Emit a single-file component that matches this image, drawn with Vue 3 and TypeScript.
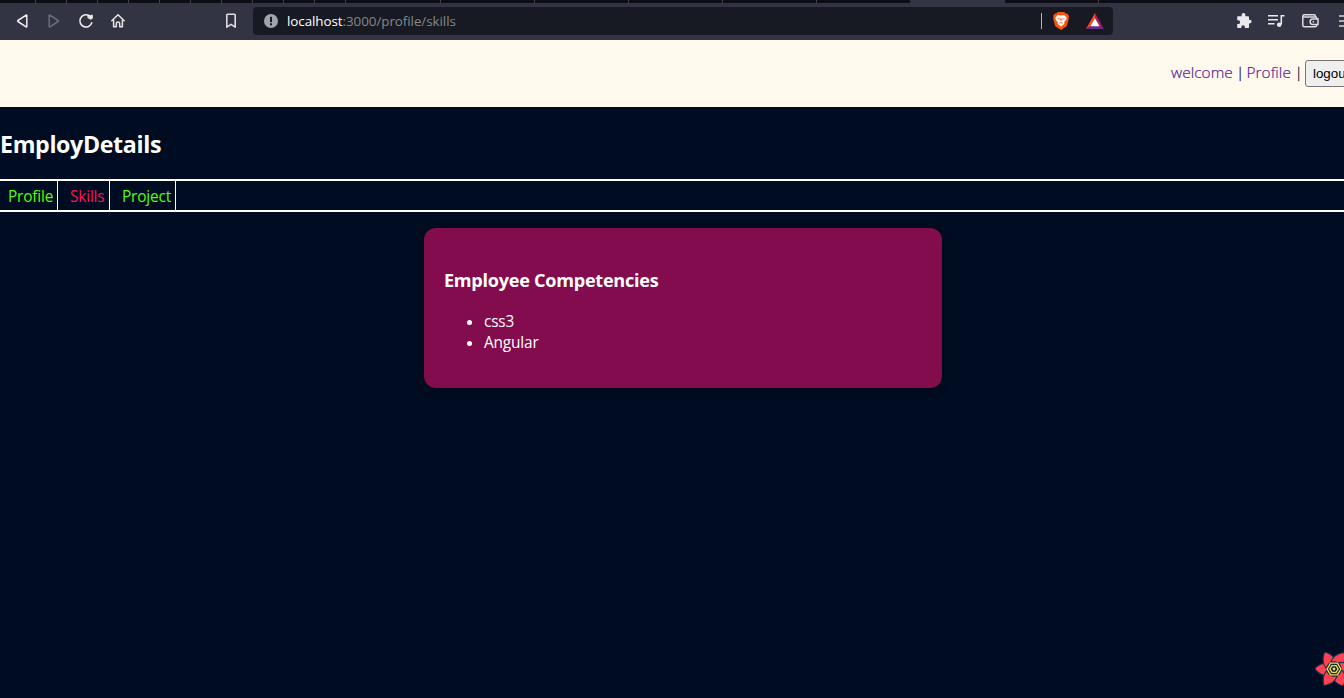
<script setup lang="ts">
interface NavTab {
  label: string
  kind: string
  active?: boolean
}

const tabEdges: number[] = [35, 66, 97, 128, 159, 190, 221, 252, 283, 314, 345, 440, 534, 628, 722, 816, 1098]
const tabs: NavTab[] = [
  { label: 'Profile', kind: 'profile' },
  { label: 'Skills', kind: 'skills', active: true },
  { label: 'Project', kind: 'project' },
]
const skills: string[] = ['css3', 'Angular']
const petals: number[] = [0, 60, 120, 180, 240, 300]
</script>

<template>
  <div class="window">
    <svg class="tabstrip" width="1344" height="3" shape-rendering="crispEdges">
      <rect width="1344" height="3" fill="#0c0d16" />
      <rect v-for="x in tabEdges" :key="x" :x="x" y="0" width="1" height="3" fill="#45413f" />
      <rect x="910" y="0" width="95" height="3" fill="#323443" />
    </svg>
    <div class="toolbar">
      <div class="nav-icons">
        <svg width="32" height="32" viewBox="0 0 32 32" fill="none" stroke="#eeeeef" stroke-width="1.5" stroke-linejoin="round">
          <path d="M18.8 10.4v11.2q0 .7-.7.3L9.9 16.5q-.7-.5 0-1l8.2-5.4q.7-.4.7.3Z" />
        </svg>
        <svg width="32" height="32" viewBox="0 0 32 32" fill="none" stroke="#6d6e7a" stroke-width="1.5" stroke-linejoin="round">
          <path d="M9.2 10.4v11.2q0 .7.7.3l8.2-5.4q.7-.5 0-1l-8.2-5.4q-.7-.4-.7.3Z" />
        </svg>
        <svg width="32" height="32" viewBox="0 0 32 32" fill="none" stroke="#eeeeef" stroke-width="1.6" stroke-linecap="round">
          <path d="M17.2 10.7A6.1 6.1 0 1 0 19.8 17.8" />
          <path d="M16.2 10.4h2.3l1.9-.3v3.2l-1.4 1-2.8-1.2Z" fill="#eeeeef" stroke-width=".8" />
        </svg>
        <svg width="32" height="32" viewBox="0 0 32 32" fill="none" stroke="#e6e6e8" stroke-width="1.5" stroke-linejoin="round" stroke-linecap="round">
          <path d="M7.8 15.7 14 9.8l6.2 5.9M9.6 14.7v7h2.7v-3.3q0-1.4 1.7-1.4t1.7 1.4v3.3h2.7v-7" />
        </svg>
      </div>
      <svg class="bookmark" width="14" height="18" viewBox="0 0 14 18" fill="none" stroke="#dcdcdf" stroke-width="1.6" stroke-linejoin="round">
        <path d="M2.8 3q0-.8.8-.8h6.8q.8 0 .8.8v12.2L7 12.4l-4.2 2.8Z" />
      </svg>
      <div class="address">
        <svg width="14" height="14" viewBox="0 0 14 14">
          <circle cx="7" cy="7" r="7" fill="#a0a3ab" />
          <rect x="6" y="2.8" width="2" height="5.4" fill="#171a22" />
          <rect x="6" y="9.3" width="2" height="2" fill="#171a22" />
        </svg>
        <div class="url"><span class="host">localhost</span><span class="path">:3000/profile/skills</span></div>
        <span class="divider"></span>
        <svg class="brave" width="16" height="18" viewBox="0 0 16 18">
          <path d="m4.8 0h6.4l1.5 1.6 1.5-.2L16 4l-.5 1.5.3 1.5-2.1 7.3L8 18l-5.7-3.7L.2 7l.3-1.5L0 4l1.8-2.6 1.5.2Z" fill="#fb5410" />
          <path d="m4.8 3 3.2.5 3.2-.5 2.6 2.8-.8 2.2-1.8 2 .2 1.8L8 14.4l-3.4-2.6.2-1.8L3 8l-.8-2.2Z" fill="#fff" />
          <path d="m4.6 6.6 2 .5M11.4 6.6l-2 .5M6.2 11.4 8 10.5l1.8.9M7.4 6.5v2M8.6 6.5v2" fill="none" stroke="#fb5410" stroke-width=".8" />
        </svg>
        <svg class="bat" width="18" height="16" viewBox="0 0 18 16">
          <path d="M9 0 0 16l5-3 4-7Z" fill="#ff4724" />
          <path d="m9 0 9 16-5-3-4-7Z" fill="#9e1f63" />
          <path d="m0 16 5-3h8l5 3Z" fill="#662d91" />
          <path d="m9 5.2 4.5 8h-9Z" fill="#fff" />
        </svg>
      </div>
      <div class="extensions">
        <svg width="16" height="16" viewBox="0 0 16 16" fill="#e9e9eb">
          <path d="M2 3.2h3.6V2a1.9 1.9 0 0 1 3.8 0v1.2h2.8q.8 0 .8.8v2.8h.8a1.8 1.8 0 0 1 0 3.6H13v3.8q0 .8-.8.8H8.9v-1a1.8 1.8 0 0 0-3.6 0v1H2q-.8 0-.8-.8v-3.1h1a1.9 1.9 0 0 0 0-3.8h-1V4q0-.8.8-.8Z" />
        </svg>
        <svg width="17" height="14" viewBox="0 0 17 14" fill="none" stroke="#e9e9eb" stroke-width="1.6">
          <path d="M0 1.8h10M0 5.8h10M0 9.8h6.5M16.5 1.8h-3.2v8.8" />
          <circle cx="11.2" cy="10.8" r="2.3" fill="#e9e9eb" stroke="none" />
        </svg>
        <svg width="17" height="14" viewBox="0 0 17 14" fill="none" stroke="#dddde0" stroke-width="1.5">
          <path d="M14.7 5V4q0-1-1-1H.8M13.4 3V2q0-1.2-1.2-1.2H2.4Q.8.8.8 2.4v8.8q0 1.6 1.6 1.6h10.7q1.6 0 1.6-1.6v-.5" />
          <path d="M16 5.1h-5.2a2.7 2.7 0 0 0 0 5.4H16Z" />
          <path d="M10.6 7.8h1.5" />
        </svg>
        <svg width="16" height="14" viewBox="0 0 16 14" stroke="#d4d4d8" stroke-width="1.7">
          <path d="M0 2h16M0 7h16M0 12h16" />
        </svg>
      </div>
    </div>

    <header class="site-header">
      <a class="link welcome">welcome</a><span class="pipe">|</span>
      <a class="link account">Profile</a><span class="pipe">|</span>
      <button class="logout" type="button">logout</button>
    </header>

    <main class="content">
      <h2>EmployDetails</h2>
      <nav class="tabs">
        <a v-for="tab in tabs" :key="tab.label" class="tab" :class="[tab.kind, { active: tab.active }]">{{ tab.label }}</a>
      </nav>
      <section class="card">
        <h3>Employee Competencies</h3>
        <ul>
          <li v-for="skill in skills" :key="skill">{{ skill }}</li>
        </ul>
      </section>
    </main>

    <svg class="query-logo" width="40" height="40" viewBox="-20 -20 40 40">
      <g stroke="#123550" stroke-width="1.1" stroke-linejoin="round" fill="#ff4154">
        <path v-for="angle in petals" :key="angle" :transform="`rotate(${angle})`" d="M-5-5.5C-10-6.5-15-4.5-18.6-1.2Q-19.2-.2-18.4.8C-15 4.6-10 7.2-5 6.5Z" />
      </g>
      <circle r="7.8" fill="#0a2438" />
      <g fill="none" stroke="#f2d94c" stroke-width="1.4">
        <path d="M-6.9 0-3.45-5.9h6.9L6.9 0 3.45 5.9h-6.9Z" />
        <path d="M-4.1 0-2.05-3.4h4.1L4.1 0 2.05 3.4h-4.1Z" />
      </g>
      <circle r="1.4" fill="#f2d94c" />
    </svg>
  </div>
</template>

<style>
html,
body {
  margin: 0;
  overflow: hidden;
  background: #000c22;
}
</style>

<style scoped>
.window {
  width: 1344px;
  height: 698px;
  position: relative;
  overflow: hidden;
  background: #000c22;
  color: #fff;
  font-family: "Open Sans", "Noto Sans", sans-serif;
  font-size: 15.4px;
  letter-spacing: -0.17px;
  line-height: 21px;
}
.tabstrip {
  display: block;
}
.toolbar {
  box-sizing: border-box;
  height: 37px;
  background: #323443;
  display: flex;
  align-items: center;
  padding: 0 0 1px 8px;
}
.toolbar > *,
.site-header > * {
  flex: none;
}
.nav-icons {
  display: flex;
}
.nav-icons svg {
  display: block;
  position: relative;
  top: -0.5px;
}
.bookmark {
  margin-left: 88px;
}
.address {
  margin-left: 15px;
  width: 860px;
  height: 28px;
  border-radius: 4px;
  box-sizing: border-box;
  padding: 0 9px 0 11px;
  background: #171a22;
  display: flex;
  align-items: center;
}
.url {
  margin-left: 9px;
  font-size: 13.4px;
  letter-spacing: -0.06px;
  line-height: 20px;
  white-space: nowrap;
}
.path {
  color: #85878c;
}
.divider {
  margin-left: auto;
  width: 1px;
  height: 16px;
  background: #b0b2b8;
}
.brave {
  margin-left: 11px;
}
.bat {
  margin-left: 17px;
}
.extensions {
  margin-left: 123px;
  display: flex;
  align-items: center;
}
.extensions svg {
  flex: none;
  margin-right: 16px;
}
.extensions svg:nth-child(2) {
  margin-right: 17px;
}
.extensions svg:nth-child(3) {
  margin-right: 20px;
}
.site-header {
  height: 67px;
  box-sizing: border-box;
  background: #fff9ee;
  display: flex;
  align-items: flex-start;
  padding: 20px 0 0 1171px;
  font-weight: 350;
  white-space: nowrap;
  letter-spacing: 0.05px;
}
.link {
  color: #551a8b;
  line-height: 25px;
  -webkit-text-stroke: 0.2px #551a8b;
}
.welcome {
  width: 65px;
}
.account {
  width: 48px;
}
.pipe {
  width: 10.5px;
  color: #29204b;
  line-height: 25px;
  -webkit-text-stroke: 0.3px #29204b;
}
.logout {
  box-sizing: border-box;
  width: 54px;
  height: 27px;
  padding: 0 7px;
  border: 1px solid #767676;
  border-radius: 3px;
  background: #efefef;
  color: #000;
  font: 13.333px "Liberation Sans", Arial, sans-serif;
  text-align: left;
}
h2 {
  margin: 0;
  height: 72px;
  line-height: 75px;
  font-size: 23.2px;
  letter-spacing: -0.35px;
  font-weight: 700;
}
.tabs {
  height: 29px;
  border-top: 2px solid #fff;
  border-bottom: 2px solid #fff;
  display: flex;
}
.tab {
  box-sizing: border-box;
  border-right: 1px solid #fff;
  line-height: 31px;
  height: 29px;
  color: #5f0;
}
.profile {
  width: 58px;
  padding-left: 8px;
}
.skills {
  width: 52px;
  padding-left: 12px;
}
.project {
  width: 66px;
  padding-left: 12px;
}
.active {
  color: #ff1255;
}
.card {
  box-sizing: border-box;
  width: 518px;
  height: 160px;
  margin: 16px 0 0 424px;
  padding: 40px 20px 0;
  border-radius: 12px;
  background: #830c4e;
  box-shadow: 0 2px 8px rgba(0, 0, 0, 0.26);
}
h3 {
  margin: 0;
  font-size: 18.1px;
  letter-spacing: -0.27px;
  line-height: 25px;
}
ul {
  margin: 18px 0 0;
  padding: 0 0 0 40px;
}
.query-logo {
  position: absolute;
  left: 1314px;
  top: 649px;
}
</style>
